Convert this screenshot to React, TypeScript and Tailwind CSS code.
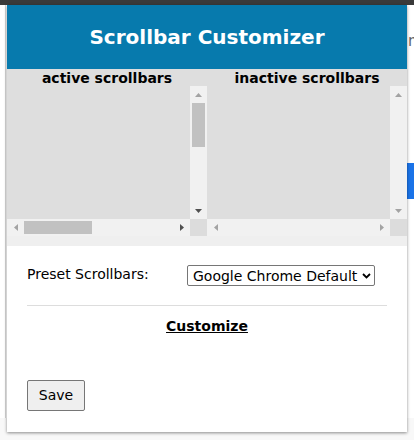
import React from 'react'

// Small CSS triangle used for the scrollbar arrow buttons
function Arrow({ dir, dark }: { dir: 'up' | 'down' | 'left' | 'right'; dark?: boolean }) {
  const fill = dark ? '#505050' : '#a3a3a3'
  const pts =
    dir === 'up' ? '0,4 7,4 3.5,0' :
    dir === 'down' ? '0,0 7,0 3.5,4' :
    dir === 'left' ? '4,0 4,7 0,3.5' : '0,0 0,7 4,3.5'
  const w = dir === 'up' || dir === 'down' ? 7 : 4
  const h = dir === 'up' || dir === 'down' ? 4 : 7
  return (
    <svg width={w} height={h} viewBox={`0 0 ${w} ${h}`} className="block">
      <polygon points={pts} fill={fill} />
    </svg>
  )
}

function ScrollBox({ active }: { active: boolean }) {
  return (
    <div className="grid grid-cols-[183px_17px] grid-rows-[133px_17px] w-[200px] h-[150px]">
      <div className="bg-[#dedede]" />
      {/* vertical bar */}
      <div className="bg-[#f1f1f1] flex flex-col">
        <div className="h-[17px] flex items-center justify-center">
          <Arrow dir="up" />
        </div>
        <div className="flex-1 px-[2px]">
          {active && <div className="h-[44px] bg-[#c1c1c1]" />}
        </div>
        <div className="h-[17px] flex items-center justify-center">
          <Arrow dir="down" dark={active} />
        </div>
      </div>
      {/* horizontal bar */}
      <div className="bg-[#f1f1f1] flex">
        <div className="w-[17px] flex items-center justify-center">
          <Arrow dir="left" />
        </div>
        <div className="flex-1 py-[2px]">
          {active && <div className="w-[68px] h-full bg-[#c1c1c1]" />}
        </div>
        <div className="w-[17px] flex items-center justify-center">
          <Arrow dir="right" dark={active} />
        </div>
      </div>
      <div className="bg-[#dcdcdc]" />
    </div>
  )
}

export default function App() {
  return (
    <div
      className="relative w-[414px] h-[440px] bg-white overflow-hidden"
      style={{ fontFamily: '"DejaVu Sans", Verdana, sans-serif' }}
    >
      {/* page behind the popup */}
      <div className="absolute top-0 left-0 right-0 h-[5px] bg-[#3a3a3a]" />
      <div className="absolute top-[5px] left-[5px] w-px h-[435px] bg-[#d4d4d4]" />
      <div className="absolute top-[30px] left-[408px] text-[15px] text-[#5f6368]">m</div>
      <div className="absolute top-[163px] left-[407px] w-[10px] h-[36px] bg-[#1a73e8]" />
      <div className="absolute top-[418px] left-0 right-0 h-[22px] bg-[#f8f8f8]" />

      <div className="absolute left-[7px] top-[5px] w-[400px] h-[427px] bg-white shadow-[0_1px_3px_rgba(0,0,0,0.45)] flex flex-col">
        <div className="h-[64px] bg-[#077aad] flex items-center justify-center">
          <h1 className="text-white font-bold text-[20px] leading-none">Scrollbar Customizer</h1>
        </div>

        <div className="bg-[#dedede]">
          <div className="flex h-[17px] items-center">
            <div className="w-[200px] text-center font-bold text-[14px] leading-none text-black">active scrollbars</div>
            <div className="w-[200px] text-center font-bold text-[14px] leading-none text-black">inactive scrollbars</div>
          </div>
          <div className="flex">
            <ScrollBox active />
            <ScrollBox active={false} />
          </div>
          <div className="h-[10px] bg-[#efefef]" />
        </div>

        <div className="px-[20px] flex flex-col">
          <div className="flex items-center mt-[19px] h-[21px]">
            <span className="w-[160px] text-[14px] leading-none text-black -mt-[3px]">Preset Scrollbars:</span>
            <div className="w-[188px] h-[21px] border border-[#767676] rounded-[2px] flex items-center justify-between pl-[5px] pr-[3px]">
              <span className="text-[14px] text-black leading-none">Google Chrome Default</span>
              <svg width="9" height="6" viewBox="0 0 9 6">
                <path d="M1 1 L4.5 4.5 L8 1" stroke="#000" strokeWidth="1.8" fill="none" />
              </svg>
            </div>
          </div>
          <div className="mt-[19px] h-px bg-[#dddddd]" />
          <div className="mt-[8px] text-center">
            <span className="font-bold text-[14px] underline text-black">Customize</span>
          </div>
          <div className="mt-[42px]">
            <button className="w-[58px] h-[31px] bg-[#efefef] border border-[#767676] rounded-[2px] text-[14px] text-black">
              Save
            </button>
          </div>
        </div>
      </div>
    </div>
  )
}
